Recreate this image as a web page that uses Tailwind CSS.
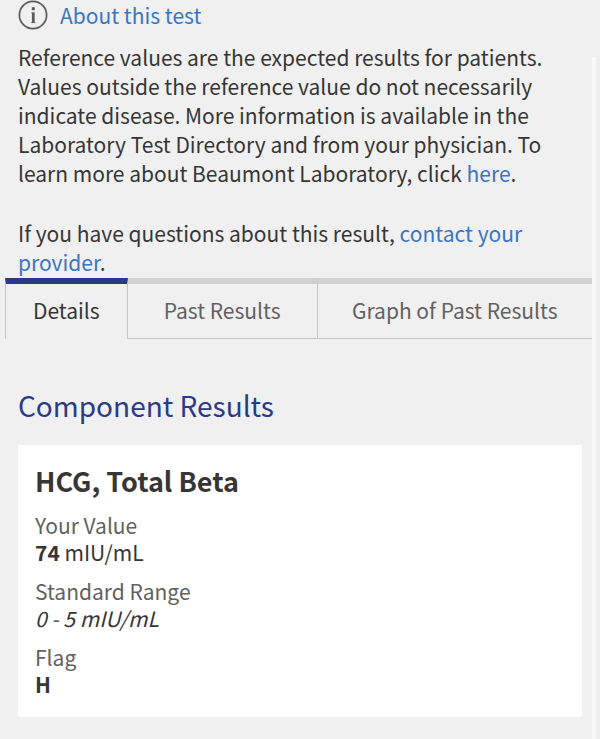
<!DOCTYPE html>
<html lang="en">
<head>
  <meta charset="UTF-8" />
  <meta name="viewport" content="width=device-width, initial-scale=1.0"/>
  <title>Test Results</title>
  <script src="https://cdn.jsdelivr.net/npm/@tailwindcss/browser@4"></script>
</head>
<body class="bg-[#f0f0f0] min-h-screen text-[#363636] font-['Noto_Sans_CJK_SC',sans-serif] text-[21px] leading-[29px]">

  <!-- Scroll track -->
  <div class="fixed right-1 top-[57px] bottom-0 w-1 bg-[#f9f9f9]"></div>

  <!-- About -->
  <section class="pl-[18px] pr-10">
    <a href="#about" class="flex items-center gap-3 h-[30px] text-[#3a75c4]">
      <svg class="w-[30px] h-[30px]" viewBox="0 0 30 30" fill="none" stroke="#5a5a5a">
        <circle cx="15" cy="15" r="13.6" stroke-width="1.7"/>
        <path d="M15.3 12.4v10.6" stroke-width="2.8"/>
        <path d="M13.2 12.8h2M13.2 22.6h4.2" stroke-width="0.7"/>
        <path d="M15.3 7.2v3" stroke-width="3"/>
      </svg>
      About this test
    </a>
    <p class="mt-[13px]">Reference values are the expected results for patients. Values outside the reference value do not necessarily indicate disease. More information is available in the Laboratory Test Directory and from your physician. To learn more about Beaumont Laboratory, click <a href="#lab" class="text-[#3a75c4]">here</a>.</p>
    <p class="mt-[31px]">If you have questions about this result, <a href="#contact" class="text-[#3a75c4]">contact your provider</a>.</p>
  </section>

  <!-- Tabs -->
  <div role="tablist" class="flex mt-px ml-[5px] mr-2">
    <button role="tab" aria-selected="true" class="h-[61px] px-[27px] pb-0.5 border-t-6 border-t-[#2b3a86] border-x border-x-[#c6c6c6]">Details</button>
    <button role="tab" aria-selected="false" class="h-[61px] px-9 pb-0.5 border-t-6 border-t-[#d2d2d2] border-b border-b-[#c6c6c6] text-[#616161]">Past Results</button>
    <button role="tab" aria-selected="false" class="h-[61px] flex-1 pb-0.5 border-t-6 border-t-[#d2d2d2] border-b border-b-[#c6c6c6] border-l border-l-[#c6c6c6] text-[#616161]">Graph of Past Results</button>
  </div>

  <!-- Results -->
  <main class="pt-[46px] px-[18px] pb-[22px]">
    <h2 class="text-[28px] leading-10 text-[#2b3a86]">Component Results</h2>
    <div class="mt-5 bg-white px-[17px] pt-[18px] pb-[19px]">
      <h3 class="text-[27px] leading-9 font-bold">HCG, Total Beta</h3>
      <dl class="mt-[13px] flex flex-col gap-3 leading-[27px]">
        <div>
          <dt class="text-[#616161]">Your Value</dt>
          <dd><strong class="font-bold">74</strong> mIU/mL</dd>
        </div>
        <div>
          <dt class="text-[#616161]">Standard Range</dt>
          <dd class="italic">0 - 5 mIU/mL</dd>
        </div>
        <div>
          <dt class="text-[#616161]">Flag</dt>
          <dd class="font-bold">H</dd>
        </div>
      </dl>
    </div>
  </main>

</body>
</html>
